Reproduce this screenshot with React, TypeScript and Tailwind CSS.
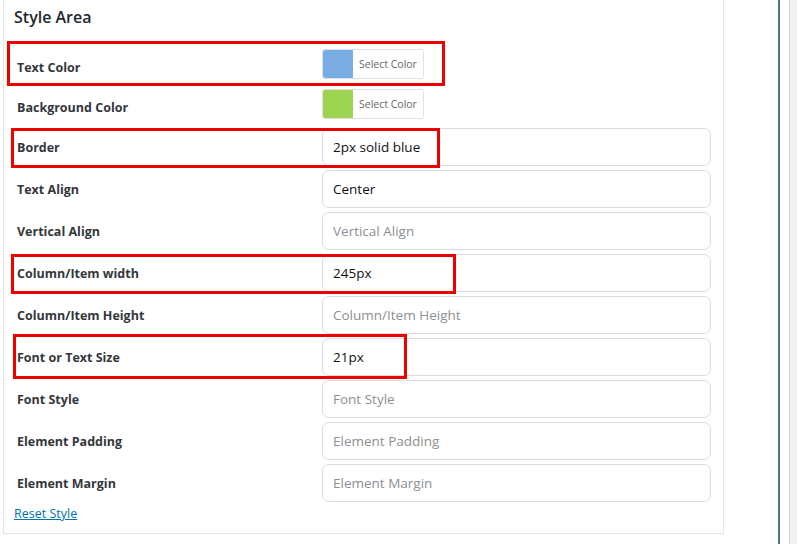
import React from "react";

const colorRows = [
  { label: "Text Color", swatch: "bg-[#7aade3]" },
  { label: "Background Color", swatch: "bg-[#9cd452]" },
];

const inputRows = [
  { label: "Border", value: "2px solid blue" },
  { label: "Text Align", value: "Center" },
  { label: "Vertical Align", placeholder: "Vertical Align" },
  { label: "Column/Item width", value: "245px" },
  { label: "Column/Item Height", placeholder: "Column/Item Height" },
  { label: "Font or Text Size", value: "21px" },
  { label: "Font Style", placeholder: "Font Style" },
  { label: "Element Padding", placeholder: "Element Padding" },
  { label: "Element Margin", placeholder: "Element Margin" },
];

// red annotation frames drawn over the screenshot
const marks = [
  "left-[7px] top-[41px] w-[438px] h-[45px]",
  "left-[11px] top-[128px] w-[429px] h-[40px]",
  "left-[11px] top-[254px] w-[445px] h-[40px]",
  "left-[13px] top-[334px] w-[394px] h-[45px]",
];

const App = () => {
  return (
    <div className="relative w-[797px] h-[544px] bg-white flex font-['Open_Sans',sans-serif] overflow-hidden">
      {/* Settings panel */}
      <div className="ml-[3px] w-[721px] h-[534px] border-x border-b border-[#e2e4e7] px-[10px] flex flex-col">
        <h2 className="mt-[5px] h-[24px] text-[16px] font-semibold text-[#23282d] leading-[24px]">
          Style Area
        </h2>

        <div className="mt-[20px] flex flex-col gap-[10px]">
          {colorRows.map((row) => (
            <div key={row.label} className="flex items-center h-[30px]">
              <span className="w-[308px] pl-[3px] pt-[8px] text-[12.5px] font-bold text-[#32373c]">
                {row.label}
              </span>
              <div className="flex h-[30px] rounded-[3px] border border-[#e0e0e0] overflow-hidden">
                <div className={`w-[30px] h-full ${row.swatch}`} />
                <div className="px-[6px] pt-[1px] flex items-center text-[10.5px] text-[#666] bg-white">
                  Select Color
                </div>
              </div>
            </div>
          ))}
        </div>

        <div className="mt-[9px] flex flex-col gap-[4px]">
          {inputRows.map((row) => (
            <div key={row.label} className="flex items-center h-[38px]">
              <span className="w-[308px] pl-[3px] pt-[3px] text-[12.5px] font-bold text-[#32373c]">
                {row.label}
              </span>
              <input
                className="w-[389px] h-[38px] rounded-[7px] border border-[#dcdcde] px-[10px] text-[13.5px] text-[#111] placeholder:text-[#8c8f94] outline-none"
                defaultValue={row.value}
                placeholder={row.placeholder}
              />
            </div>
          ))}
        </div>

        <a href="#" className="mt-[3px] text-[12.5px] text-[#0073aa] underline">
          Reset Style
        </a>
      </div>

      {/* Right edge: scroll column */}
      <div className="ml-[54px] w-[2px] h-full bg-[#4e7785]" />
      <div className="ml-[9px] w-[1px] h-full bg-[#cfcfcf]" />
      <div className="flex-1 h-full bg-[#f1f1f1]" />

      {marks.map((m) => (
        <div key={m} className={`absolute border-[3px] border-[#ee0000] ${m}`} />
      ))}
    </div>
  );
};

export default App;
